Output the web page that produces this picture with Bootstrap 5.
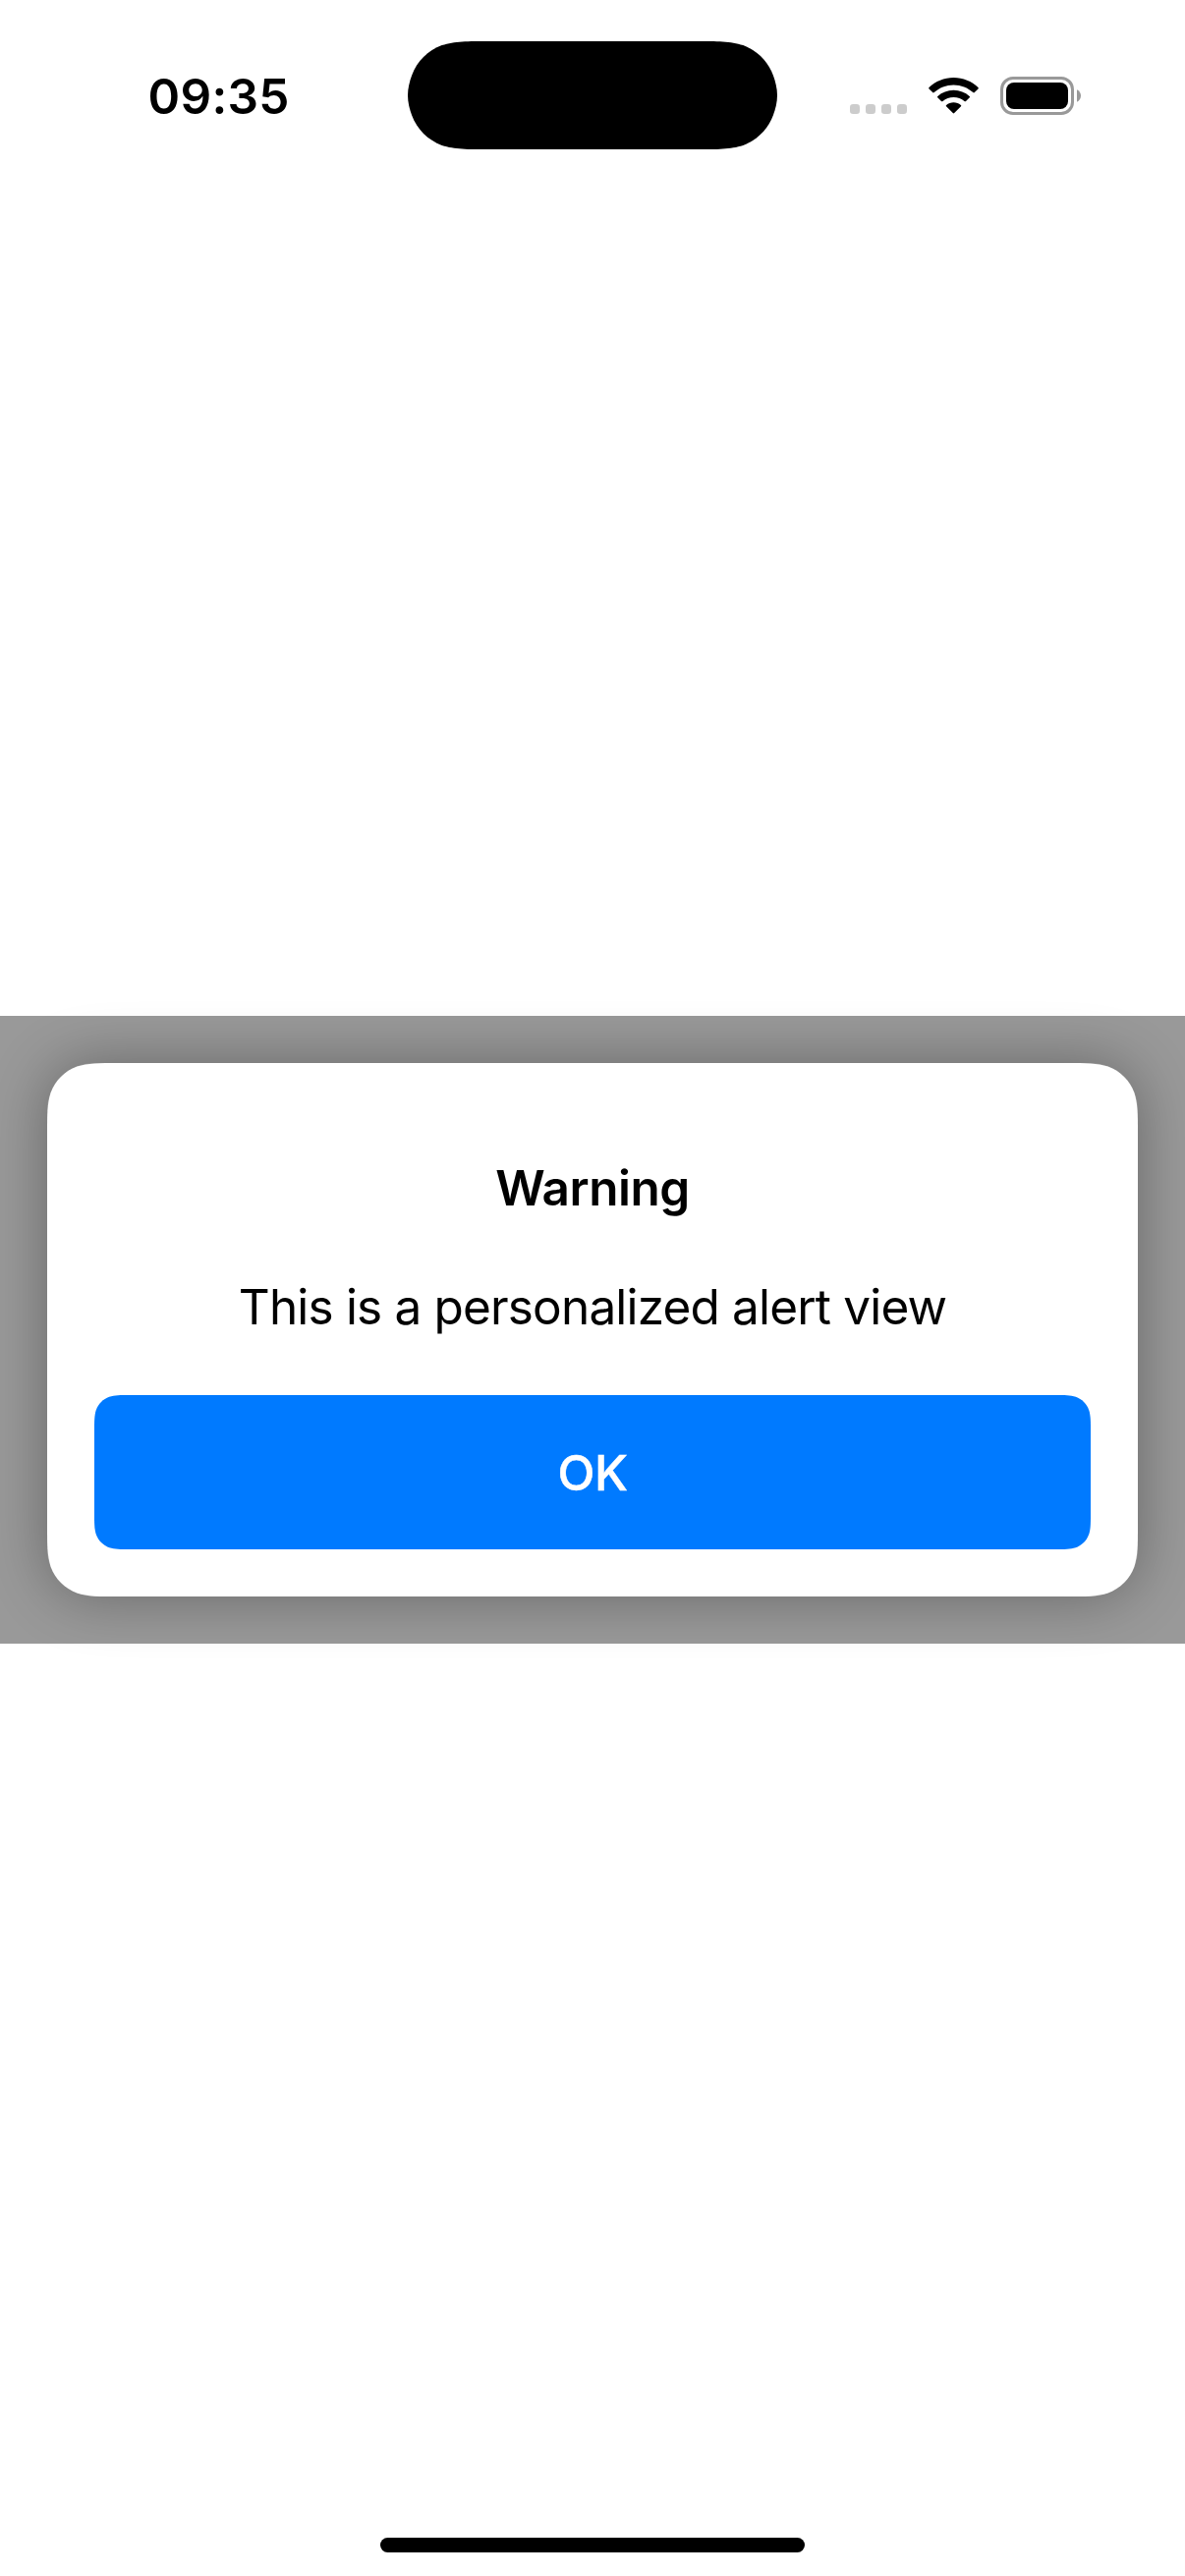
<!DOCTYPE html>
<html lang="en">
<head>
<meta charset="utf-8">
<meta name="viewport" content="width=device-width, initial-scale=1">
<title>Alert</title>
<link href="https://cdn.jsdelivr.net/npm/bootstrap@5.3.0/dist/css/bootstrap.min.css" rel="stylesheet">
<style>
  body { font-family: Inter, "Liberation Sans", sans-serif; font-size: 49.5px; line-height: 60px; color: #000; background: #fff; }
  .screen { height: 2622px; }
  .status-bar { height: 177px; padding-top: 42px; }
  .side { height: 110px; }
  .clock { font-weight: 600; padding-left: 150.5px; width: 415px; padding-top: 26px; letter-spacing: .3px; }
  .island { width: 376px; height: 110px; }
  .indicators { padding-left: 74px; padding-top: 36px; }
  .backdrop-band { margin-top: 857px; height: 639px; padding: 48px; background: #999; }
  .card-shadow { border-radius: 48px; box-shadow: 0 0 60px rgba(0,0,0,.33); }
  /* continuous-curvature corners, 48px and 24px */
  .alert-card { height: 543px; padding: 97px 48px 48px; background: #fff;
    clip-path: path("M73.4 0H1036.6C1057.8 0 1068.3 0 1079.7 3.6C1092.1 8.1 1101.9 17.9 1106.4 30.3C1110 41.7 1110 52.2 1110 73.4V469.6C1110 490.8 1110 501.3 1106.4 512.7C1101.9 525.1 1092.1 534.9 1079.7 539.4C1068.3 543 1057.8 543 1036.6 543H73.4C52.2 543 41.7 543 30.3 539.4C17.9 534.9 8.1 525.1 3.6 512.7C0 501.3 0 490.8 0 469.6V73.4C0 52.2 0 41.7 3.6 30.3C8.1 17.9 17.9 8.1 30.3 3.6C41.7 0 52.2 0 73.4 0Z"); }
  .alert-heading-text { font-size: 49.5px; line-height: 60px; font-weight: 600; letter-spacing: -.5px; }
  .alert-message { margin-top: 61px; letter-spacing: -.83px; }
  .btn-ok { flex: 0 0 157px; margin-top: 60px; padding-top: 7px; font-size: 49.5px; font-weight: 500; -webkit-text-stroke: .5px #fff; border: 0; border-radius: 0; background: #007aff; letter-spacing: -.4px;
    clip-path: path("M36.7 0H977.3C987.9 0 993.2 0 998.8 1.8C1005.1 4.1 1009.9 8.9 1012.2 15.2C1014 20.8 1014 26.1 1014 36.7V120.3C1014 130.9 1014 136.2 1012.2 141.8C1009.9 148.1 1005.1 152.9 998.8 155.2C993.2 157 987.9 157 977.3 157H36.7C26.1 157 20.8 157 15.2 155.2C8.9 152.9 4.1 148.1 1.8 141.8C0 136.2 0 130.9 0 120.3V36.7C0 26.1 0 20.8 1.8 15.2C4.1 8.9 8.9 4.1 15.2 1.8C20.8 0 26.1 0 36.7 0Z"); }
  .home-bar { width: 432px; height: 15px; margin-bottom: 24px; background: #000; border-radius: 8px; }
</style>
</head>
<body>
<div class="screen d-flex flex-column overflow-hidden">
  <header class="status-bar d-flex align-items-start">
    <div class="side clock">09:35</div>
    <svg class="island flex-shrink-0" viewBox="0 0 376 110"><path d="M84 0H292C316 0 328 0 341.3 4.1C355.5 9.3 366.7 20.5 371.9 34.7C374.2 41 376 48 376 55C376 62 374.2 69 371.9 75.3C366.7 89.5 355.5 100.7 341.3 105.9C328 110 316 110 292 110H84C60 110 48 110 34.7 105.9C20.5 100.7 9.3 89.5 4.1 75.3C1.8 69 0 62 0 55C0 48 1.8 41 4.1 34.7C9.3 20.5 20.5 9.3 34.7 4.1C48 0 60 0 84 0Z"/></svg>
    <div class="side indicators">
      <svg class="d-block" width="236" height="39" viewBox="0 0 236 39" aria-hidden="true">
        <g fill="#ccc"><rect x="0" y="28" width="10" height="10" rx="3.2"/><rect x="16" y="28" width="10" height="10" rx="3.2"/><rect x="32" y="28" width="10" height="10" rx="3.2"/><rect x="48" y="28" width="10" height="10" rx="3.2"/></g>
        <path d="M105.5 1C115 1 124 4.800 130.500 11Q131.200 11.700 130.500 12.400L126.800 16.100Q126.100 16.800 125.300 16.100C120 11.300 113 8.500 105.500 8.500S91 11.300 85.700 16.100Q84.900 16.800 84.200 16.100L80.500 12.400Q79.800 11.700 80.500 11C87 4.800 96 1 105.500 1Z"/>
        <path d="M105.500 13.700C111.700 13.700 117.300 16 121.700 19.900Q122.500 20.600 121.800 21.300L118 25Q117.300 25.700 116.500 25C113.500 22.500 109.700 21.100 105.500 21.100S97.500 22.500 94.500 25Q93.700 25.700 93 25L89.200 21.300Q88.500 20.600 89.300 19.900C93.700 16 99.300 13.700 105.500 13.700Z"/>
        <path d="M105.500 26.300C108.300 26.300 110.900 27.200 112.900 28.900Q113.700 29.600 113 30.300L106.200 37.100Q105.500 37.800 104.800 37.100L98 30.300Q97.300 29.600 98.100 28.900C100.100 27.200 102.700 26.300 105.500 26.300Z"/>
        <rect x="154.500" y="1.500" width="72" height="36" rx="11.500" fill="none" stroke="#999" stroke-width="3"/>
        <rect x="159" y="6" width="63" height="27" rx="8"/>
        <path d="M231 13.200C233.400 14.200 235 16.700 235 19.500S233.400 24.800 231 25.800Z" fill="#999"/>
      </svg>
    </div>
  </header>

  <main class="backdrop-band">
    <div class="card-shadow">
      <section class="alert-card d-flex flex-column text-center" role="alertdialog">
        <h1 class="alert-heading-text mb-0">Warning</h1>
        <p class="alert-message mb-0">This is a personalized alert view</p>
        <button type="button" class="btn btn-primary btn-ok w-100">OK</button>
      </section>
    </div>
  </main>

  <div class="home-bar mt-auto mx-auto"></div>
</div>
<script src="https://cdn.jsdelivr.net/npm/bootstrap@5.3.0/dist/js/bootstrap.bundle.min.js"></script>
</body>
</html>
